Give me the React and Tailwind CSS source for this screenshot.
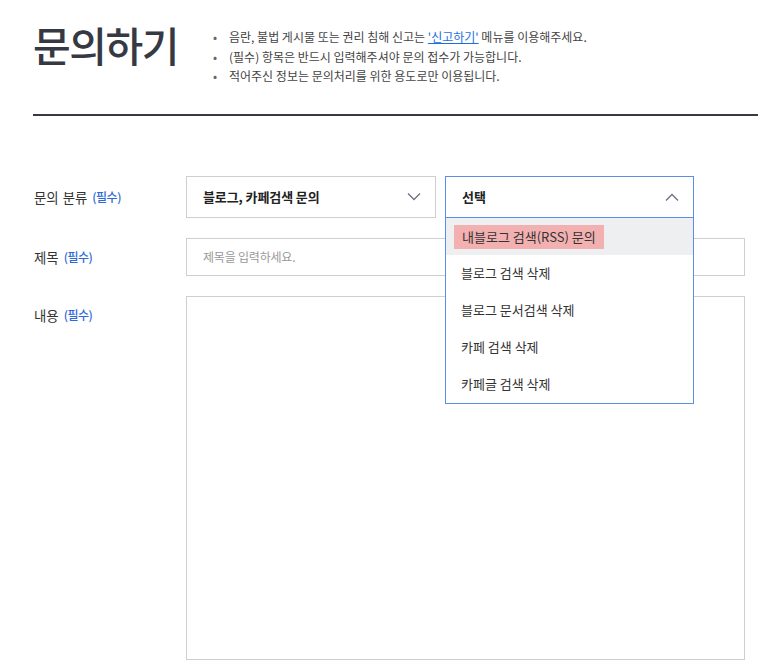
import React from "react";

const font = { fontFamily: '"Noto Sans CJK KR", "Noto Sans", sans-serif' };

function Chevron({ up }) {
  return (
    <svg width="14" height="8" viewBox="0 0 14 8" fill="none">
      {up ? (
        <polyline points="1,7.5 7,1.5 13,7.5" stroke="#6b7280" strokeWidth="1.3" />
      ) : (
        <polyline points="1,0.5 7,6.5 13,0.5" stroke="#6b7280" strokeWidth="1.3" />
      )}
    </svg>
  );
}

function Label({ children }) {
  return (
    <div className="w-[152px] shrink-0 flex items-center text-[13.4px] text-[#333]">
      <span className="[word-spacing:1px]">{children}</span>
      <span className="ml-[5px] text-[12px] text-[#2d6ad6] font-medium tracking-[-0.5px]">(필수)</span>
    </div>
  );
}

export default function App() {
  const items = ["블로그 검색 삭제", "블로그 문서검색 삭제", "카페 검색 삭제", "카페글 검색 삭제"];
  return (
    <div className="w-[758px] h-[672px] bg-white overflow-hidden" style={font}>
      <div className="flex pl-[33px] pt-[18px] h-[114px]">
        <h1 className="text-[41px] leading-[52px] font-medium text-[#363943] tracking-[-1.5px] w-[182px] shrink-0">
          문의하기
        </h1>
        <ul className="pt-[9px] text-[12px] leading-[19.5px] text-[#444]">
          <li className="flex">
            <span className="w-[14px] -ml-[2px] mr-[2px] text-[#666]">•</span>
            <span>
              음란, 불법 게시물 또는 권리 침해 신고는{" "}
              <span className="text-[#1a6fe0] underline">'신고하기'</span> 메뉴를 이용해주세요.
            </span>
          </li>
          <li className="flex">
            <span className="w-[14px] -ml-[2px] mr-[2px] text-[#666]">•</span>
            <span>(필수) 항목은 반드시 입력해주셔야 문의 접수가 가능합니다.</span>
          </li>
          <li className="flex">
            <span className="w-[14px] -ml-[2px] mr-[2px] text-[#666]">•</span>
            <span>적어주신 정보는 문의처리를 위한 용도로만 이용됩니다.</span>
          </li>
        </ul>
      </div>
      <div className="ml-[33px] h-[2px] bg-[#383a43]" />

      <div className="pl-[34px] pr-[13px] pt-[60px] flex flex-col gap-[20px]">
        <div className="flex h-[42px]">
          <Label>문의 분류</Label>
          <div className="w-[250px] h-[42px] border border-[#cfcfcf] flex items-center justify-between pl-[16px] pr-[14px] text-[13px] font-semibold text-[#222] tracking-[-0.1px]">
            <span>블로그, 카페검색 문의</span>
            <Chevron />
          </div>
          <div className="relative ml-[9px] w-[249px] h-[42px]">
            <div className="absolute left-0 top-0 w-[249px] border border-[#5a8ee6] bg-white z-10">
              <div className="h-[41px] flex items-center justify-between pl-[16px] pr-[14px] border-b border-[#5a8ee6] text-[13px] font-semibold text-[#222]">
                <span>선택</span>
                <Chevron up />
              </div>
              <div className="h-[37px] bg-[#eeeff1] flex items-center pl-[8px]">
                <span className="bg-[#f2b0b1] px-[8px] h-[24px] flex items-center text-[13px] text-[#333]">
                  내블로그 검색(RSS) 문의
                </span>
              </div>
              {items.map((t) => (
                <div key={t} className="h-[37px] flex items-center pl-[15px] pb-[1px] text-[13px] text-[#333]">
                  {t}
                </div>
              ))}
            </div>
          </div>
        </div>

        <div className="flex h-[38px]">
          <Label>제목</Label>
          <div className="flex-1 h-[38px] border border-[#cfcfcf] flex items-center pl-[16px] text-[12px] text-[#999] tracking-[-0.2px]">
            제목을 입력하세요.
          </div>
        </div>

        <div className="flex">
          <div className="h-[38px] flex items-start pt-[9px]">
            <Label>내용</Label>
          </div>
          <div className="flex-1 h-[364px] border border-[#cfcfcf]" />
        </div>
      </div>
    </div>
  );
}
